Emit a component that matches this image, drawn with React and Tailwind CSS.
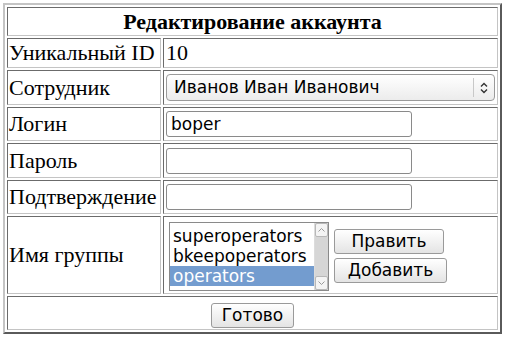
import React from 'react';

const serif = { fontFamily: '"Liberation Serif", serif' };

const Cell = ({ children, className = '', ...rest }) => (
  <td
    {...rest}
    className={`border border-t-[#6b6b6b] border-l-[#6b6b6b] border-r-[#c4c4c4] border-b-[#c4c4c4] p-0 ${className}`}
  >
    {children}
  </td>
);

const TextInput = ({ value }) => (
  <input
    type="text"
    defaultValue={value}
    className="block h-[26px] w-[246px] rounded-[3px] border border-[#8a8a8a] bg-white px-[4px] font-['DejaVu_Sans',sans-serif] text-[17px] text-black outline-none"
  />
);

const Btn = ({ children, className = '' }) => (
  <button
    className={`h-[25px] rounded-[3px] border border-[#9a9a9a] bg-gradient-to-b from-white to-[#e4e4e4] font-['DejaVu_Sans',sans-serif] text-[17px] leading-none text-black ${className}`}
  >
    {children}
  </button>
);

export default function App() {
  const groups = ['superoperators', 'bkeepoperators', 'operators'];
  const selected = 'operators';

  return (
    <div className="h-[339px] w-[509px] bg-white pl-[3px] pt-[3px]" style={serif}>
      <table className="w-[499px] border-separate border-spacing-[2px] border-2 border-t-[#c4c4c4] border-l-[#c4c4c4] border-r-[#5a5a5a] border-b-[#5a5a5a] text-[22px] leading-[24px] text-black">
        <tbody>
          <tr>
            <Cell colSpan={2} className="h-[29px] text-center font-bold">
              Редактирование аккаунта
            </Cell>
          </tr>
          <tr>
            <Cell className="h-[30px] w-[154px] whitespace-nowrap pl-[1px]">Уникальный ID</Cell>
            <Cell className="pl-[2px]">10</Cell>
          </tr>
          <tr>
            <Cell className="h-[35px] pl-[1px]">Сотрудник</Cell>
            <Cell className="px-[2px]">
              <div className="flex h-[27px] items-center rounded-[4px] border border-[#9a9a9a] bg-gradient-to-b from-white to-[#ececec] font-['DejaVu_Sans',sans-serif] text-[17px] leading-none text-black">
                <span className="flex-1 pl-[7px]">Иванов Иван Иванович</span>
                <span className="flex h-[19px] w-[21px] items-center justify-center border-l border-[#c8c8c8]">
                  <svg width="8" height="12" viewBox="0 0 8 12" fill="none" stroke="#333" strokeWidth="1.4">
                    <path d="M1 4.5 L4 1.5 L7 4.5" />
                    <path d="M1 7.5 L4 10.5 L7 7.5" />
                  </svg>
                </span>
              </div>
            </Cell>
          </tr>
          <tr>
            <Cell className="h-[34px] pl-[1px]">Логин</Cell>
            <Cell className="pl-[2px]">
              <TextInput value="boper" />
            </Cell>
          </tr>
          <tr>
            <Cell className="h-[35px] pl-[1px]">Пароль</Cell>
            <Cell className="pl-[2px]">
              <TextInput value="" />
            </Cell>
          </tr>
          <tr>
            <Cell className="h-[34px] whitespace-nowrap pl-[1px]">Подтверждение</Cell>
            <Cell className="pl-[2px]">
              <TextInput value="" />
            </Cell>
          </tr>
          <tr>
            <Cell className="h-[78px] pl-[1px]">Имя группы</Cell>
            <Cell className="pl-[5px] pt-[2px]">
              <div className="flex items-center gap-[5px]">
                <div className="flex h-[69px] w-[160px] border border-[#8a8a8a] bg-white font-['DejaVu_Sans',sans-serif] text-[17px] leading-[20px] text-black">
                  <div className="flex-1 pt-[3px]">
                    {groups.map((g) => (
                      <div
                        key={g}
                        className={`pl-[3px] ${g === selected ? 'bg-[#739ccf] text-white' : ''}`}
                      >
                        {g}
                      </div>
                    ))}
                  </div>
                  <div className="flex w-[14px] flex-col border-l border-[#dcdcdc] bg-[#d6d6d6]">
                    <div className="flex h-[14px] items-center justify-center rounded-[2px] border border-[#b8b8b8] bg-[#f4f4f4]">
                      <svg width="7" height="4" viewBox="0 0 7 4" fill="none" stroke="#9a9a9a">
                        <path d="M0.5 3.5 L3.5 0.5 L6.5 3.5" />
                      </svg>
                    </div>
                    <div className="flex-1" />
                    <div className="flex h-[14px] items-center justify-center rounded-[2px] border border-[#b8b8b8] bg-[#f4f4f4]">
                      <svg width="7" height="4" viewBox="0 0 7 4" fill="none" stroke="#9a9a9a">
                        <path d="M0.5 0.5 L3.5 3.5 L6.5 0.5" />
                      </svg>
                    </div>
                  </div>
                </div>
                <div className="flex flex-col gap-[4px]">
                  <Btn className="w-[110px]">Править</Btn>
                  <Btn className="w-[113px]">Добавить</Btn>
                </div>
              </div>
            </Cell>
          </tr>
          <tr>
            <Cell colSpan={2} className="h-[34px] pt-[3px] text-center">
              <Btn className="w-[83px]">Готово</Btn>
            </Cell>
          </tr>
        </tbody>
      </table>
    </div>
  );
}
